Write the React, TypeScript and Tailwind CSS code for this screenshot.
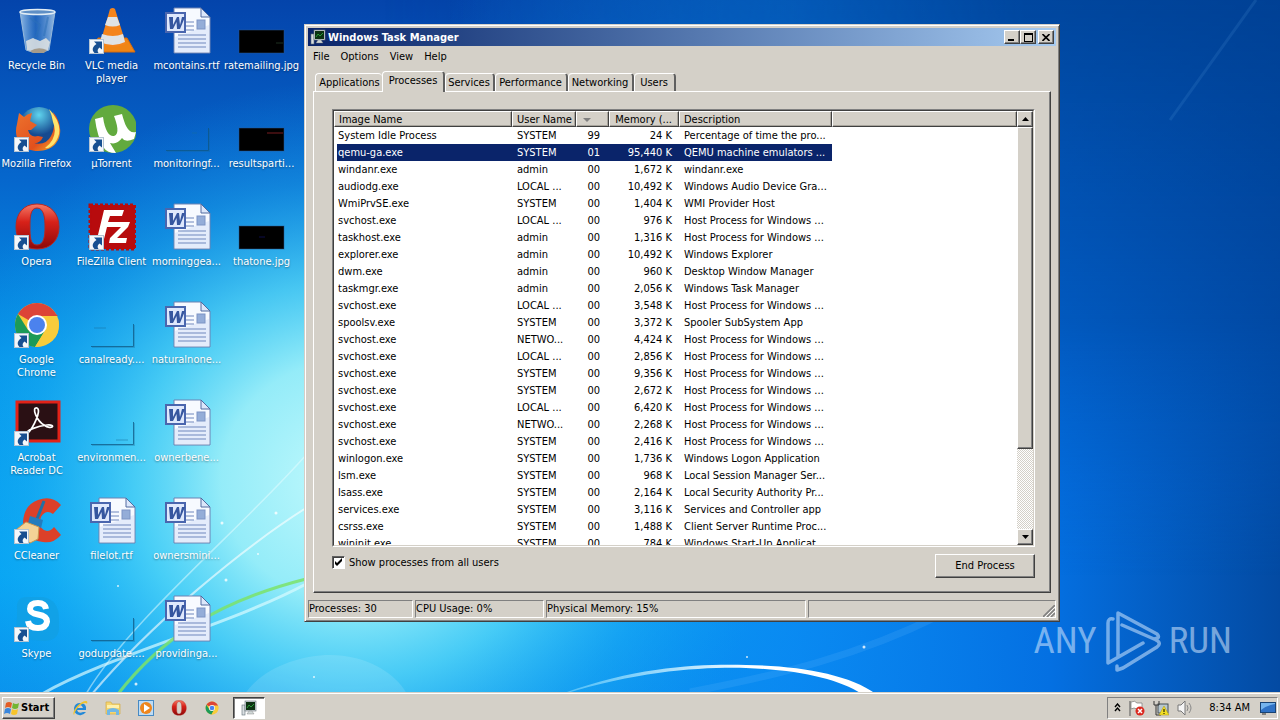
import { useState } from 'react';
import type { ReactNode } from 'react';

const raised = 'bg-[#d4d0c8] border border-t-white border-l-white border-r-[#404040] border-b-[#404040] shadow-[inset_-1px_-1px_0_#808080]';

const processes = [
  ['System Idle Process', 'SYSTEM', '99', '24 K', 'Percentage of time the pro...'],
  ['qemu-ga.exe', 'SYSTEM', '01', '95,440 K', 'QEMU machine emulators ...'],
  ['windanr.exe', 'admin', '00', '1,672 K', 'windanr.exe'],
  ['audiodg.exe', 'LOCAL ...', '00', '10,492 K', 'Windows Audio Device Gra...'],
  ['WmiPrvSE.exe', 'SYSTEM', '00', '1,404 K', 'WMI Provider Host'],
  ['svchost.exe', 'LOCAL ...', '00', '976 K', 'Host Process for Windows ...'],
  ['taskhost.exe', 'admin', '00', '1,316 K', 'Host Process for Windows ...'],
  ['explorer.exe', 'admin', '00', '10,492 K', 'Windows Explorer'],
  ['dwm.exe', 'admin', '00', '960 K', 'Desktop Window Manager'],
  ['taskmgr.exe', 'admin', '00', '2,056 K', 'Windows Task Manager'],
  ['svchost.exe', 'LOCAL ...', '00', '3,548 K', 'Host Process for Windows ...'],
  ['spoolsv.exe', 'SYSTEM', '00', '3,372 K', 'Spooler SubSystem App'],
  ['svchost.exe', 'NETWO...', '00', '4,424 K', 'Host Process for Windows ...'],
  ['svchost.exe', 'LOCAL ...', '00', '2,856 K', 'Host Process for Windows ...'],
  ['svchost.exe', 'SYSTEM', '00', '9,356 K', 'Host Process for Windows ...'],
  ['svchost.exe', 'SYSTEM', '00', '2,672 K', 'Host Process for Windows ...'],
  ['svchost.exe', 'LOCAL ...', '00', '6,420 K', 'Host Process for Windows ...'],
  ['svchost.exe', 'NETWO...', '00', '2,268 K', 'Host Process for Windows ...'],
  ['svchost.exe', 'SYSTEM', '00', '2,416 K', 'Host Process for Windows ...'],
  ['winlogon.exe', 'SYSTEM', '00', '1,736 K', 'Windows Logon Application'],
  ['lsm.exe', 'SYSTEM', '00', '968 K', 'Local Session Manager Ser...'],
  ['lsass.exe', 'SYSTEM', '00', '2,164 K', 'Local Security Authority Pr...'],
  ['services.exe', 'SYSTEM', '00', '3,116 K', 'Services and Controller app'],
  ['csrss.exe', 'SYSTEM', '00', '1,488 K', 'Client Server Runtime Proc...'],
  ['wininit.exe', 'SYSTEM', '00', '784 K', 'Windows Start-Up Applicat...'],
];

function Wallpaper() {
  return (
    <svg className="absolute inset-0 h-full w-full" viewBox="0 0 1280 720" preserveAspectRatio="none" aria-hidden="true">
      <defs>
        <linearGradient id="sky" x1="0" y1="0" x2="0" y2="1">
          <stop offset="0" stopColor="#0444ab" />
          <stop offset="0.25" stopColor="#0667cd" />
          <stop offset="0.5" stopColor="#0596ea" />
          <stop offset="0.8" stopColor="#04a4f4" />
          <stop offset="1" stopColor="#0b8fec" />
        </linearGradient>
        <radialGradient id="glow" gradientUnits="userSpaceOnUse" cx="0" cy="0" r="1" gradientTransform="translate(350 480) scale(430 400)">
          <stop offset="0" stopColor="#c4fafd" />
          <stop offset="0.3" stopColor="#9cf0f9" stopOpacity="0.95" />
          <stop offset="0.5" stopColor="#5cdcf8" stopOpacity="0.75" />
          <stop offset="0.75" stopColor="#27b8f4" stopOpacity="0.35" />
          <stop offset="1" stopColor="#10a0f0" stopOpacity="0" />
        </radialGradient>
        <linearGradient id="right" x1="0" y1="0" x2="1" y2="0">
          <stop offset="0.35" stopColor="#0e90f4" stopOpacity="0" />
          <stop offset="0.62" stopColor="#0a86f2" stopOpacity="0.8" />
          <stop offset="0.82" stopColor="#0470e2" />
          <stop offset="1" stopColor="#034aa2" />
        </linearGradient>
        <linearGradient id="top" x1="0" y1="0" x2="0" y2="1">
          <stop offset="0" stopColor="#003f92" stopOpacity="0.85" />
          <stop offset="0.45" stopColor="#0048a4" stopOpacity="0.55" />
          <stop offset="0.8" stopColor="#0060d0" stopOpacity="0" />
        </linearGradient>
        <linearGradient id="fade" x1="0" y1="0" x2="1" y2="0">
          <stop offset="0.3" stopColor="#000" />
          <stop offset="0.8" stopColor="#fff" />
        </linearGradient>
        <mask id="topMask"><rect width="1280" height="720" fill="url(#fade)" /></mask>
        <linearGradient id="arc" x1="0" y1="0" x2="1" y2="0">
          <stop offset="0" stopColor="#8fe0ff" stopOpacity="0.5" />
          <stop offset="0.6" stopColor="#fff" />
          <stop offset="1" stopColor="#fff" />
        </linearGradient>
      </defs>
      <rect width="1280" height="720" fill="url(#sky)" />
      <rect width="1280" height="720" fill="url(#right)" />
      <rect width="1280" height="720" fill="url(#top)" mask="url(#topMask)" />
      <rect width="1280" height="720" fill="url(#glow)" />
      <path d="M42 694C110 655 230 625 306 584" fill="none" stroke="#d8fbff" strokeWidth="3" opacity="0.7" />
      <path d="M86 694C130 620 240 530 306 455" fill="none" stroke="#e8feff" strokeWidth="1.5" opacity="0.5" />
      <path d="M92 694C150 625 240 550 306 508" fill="none" stroke="#fff" strokeWidth="2" opacity="0.6" />
      <path d="M118 694C160 640 215 602 306 579" fill="none" stroke="#7be36a" strokeWidth="3" opacity="0.85" />
      <path d="M245 694C262 668 300 655 330 655C365 655 395 672 407 694Z" fill="#fff" opacity="0.12" />
      <path d="M690 692C780 675 860 655 940 615" fill="none" stroke="#7cc4ff" strokeWidth="7" opacity="0.15" />
      <path d="M564 693C640 666 700 664 746 665C800 666 848 674 876 694H862C838 679 800 670 746 668C700 667 640 671 564 694Z" fill="url(#arc)" />
      <path d="M1170 120L1256 0" stroke="#5fa5e4" strokeWidth="3" opacity="0.15" />
      <g fill="#fff" opacity="0.8">
        <circle cx="222" cy="523" r="1.5" /><circle cx="276" cy="513" r="1.5" /><circle cx="226" cy="580" r="1.5" />
        <circle cx="136" cy="684" r="1.5" /><circle cx="118" cy="586" r="1" /><circle cx="258" cy="554" r="1" />
        <circle cx="864" cy="647" r="1.5" /><circle cx="747" cy="657" r="1" /><circle cx="314" cy="677" r="1" />
      </g>
    </svg>
  );
}

function Svg({ children, size = 48, box = 48 }: { children: ReactNode; size?: number; box?: number }) {
  return <svg width={size} height={size} viewBox={`0 0 ${box} ${box}`} aria-hidden="true" className="shrink-0">{children}</svg>;
}

function Shortcut() {
  return (
    <g>
      <rect x="1.5" y="32.5" width="14" height="14" fill="#f4f7fa" stroke="#b4c4d3" />
      <path d="M6 34.500H14V42.500L11.500 40.500C9.500 42 9 44 10.500 46H6.500C3.500 43 4.500 39.500 8.500 37Z" fill="#174f91" />
    </g>
  );
}

function ChromeArt() {
  return (
    <g>
      <circle cx="24" cy="24" r="22" fill="#f8cc3b" />
      <path d="M24 24L5 13A22 22 0 0 1 43 13L45 15H24Z" fill="#dc4437" />
      <path d="M5 13A22 22 0 0 0 22 46L33 28L24 33L15 29Z" fill="#1c9a58" />
      <path d="M22 46L33 28L45 17Q49 36 34 43Q28 46 22 46" fill="#f8cc3b" />
      <circle cx="24" cy="24" r="10" fill="#fff" />
      <circle cx="24" cy="24" r="8" fill="#4b82ee" />
    </g>
  );
}

function OperaArt() {
  return (
    <g>
      <defs>
        <linearGradient id="opera" x1="0" y1="0" x2="0" y2="1">
          <stop offset="0" stopColor="#f47a67" /><stop offset="0.4" stopColor="#d72119" /><stop offset="1" stopColor="#8c0809" />
        </linearGradient>
      </defs>
      <path fillRule="evenodd" d="M24 1C10 1 3 11 3 24S10 46 24 46S46 37 46 24S38 1 24 1M24 5C31 5 32 15 32 24S31 42 24 42S17 33 17 24S17 5 24 5" fill="url(#opera)" stroke="#b32925" />
    </g>
  );
}

function MonitorArt() {
  return (
    <g>
      <rect x="1" y="5" width="3" height="10" fill="#d9dee2" stroke="#626f77" strokeWidth="0.6" />
      <rect x="4" y="1" width="11" height="10" fill="#cfd6d9" stroke="#657078" strokeWidth="0.6" />
      <rect x="5" y="2" width="9" height="8" fill="#0c3212" />
      <path d="M6 8L8 5L10 7L13 4" stroke="#2a9a38" strokeWidth="1" fill="none" />
      <path d="M8 11H11L13 14H6Z" fill="#d0d8d8" stroke="#777" strokeWidth="0.4" />
    </g>
  );
}

function WordIcon() {
  return (
    <Svg>
      <path d="M11 1H38L47 10V46H11Z" fill="#f7faff" stroke="#6c82b3" />
      <path d="M12 30L46 18V45H12Z" fill="#d7e3f8" opacity="0.6" />
      <path d="M38 1V10H47Z" fill="#dce7fa" stroke="#526a9f" />
      <path d="M23 15H31M23 19H31M23 23H31M15 28H43M15 32H43M15 36H43M15 40H43" stroke="#6f87bd" />
      <rect x="34" y="13" width="8" height="9" fill="#94add8" stroke="#7d94c5" />
      <rect x="3" y="6" width="19" height="19" fill="#dfe8fc" stroke="#4a66ae" strokeWidth="2" />
      <path d="M6 10H10L10 18L14 10H16L17 18L19 10H22L17 22H14L13.500 15L10 22H7Z" fill="#36569f" />
    </Svg>
  );
}

function GhostImage({ mark }: { mark: string }) {
  return (
    <Svg>
      <path d={mark} stroke="#176e9d" strokeWidth="1" opacity="0.5" />
      <path d="M3 45.500H45.500V23" stroke="#0f5580" fill="none" opacity="0.75" />
      <path d="M4 46.500H46.500V24" stroke="#17658f" fill="none" opacity="0.3" />
    </Svg>
  );
}

function BlackImage({ mark, color }: { mark: string; color: string }) {
  return (
    <Svg>
      <rect x="1" y="23" width="45" height="23" fill="#000" stroke="#2b5a8f" strokeOpacity="0.5" />
      <path d={mark} stroke={color} opacity="0.8" />
    </Svg>
  );
}

const icons: Record<string, ReactNode> = {
  bin: (
    <Svg>
      <defs><linearGradient id="bin"><stop stopColor="#b4d6f2" stopOpacity="0.8" /><stop offset="0.45" stopColor="#3d82cb" stopOpacity="0.5" /><stop offset="1" stopColor="#b9d6ef" stopOpacity="0.8" /></linearGradient></defs>
      <path d="M7 5L13 43Q24 48 36 43L42 5Z" fill="url(#bin)" stroke="#98badb" />
      <path d="M13 34L20 31L27 34L33 31L37 35L35 43Q24 47 14 43Z" fill="#e4e5e3" opacity="0.85" />
      <path d="M17 44Q25 39 34 43L31 46H20Z" fill="#a59b8b" />
      <path d="M17 11L27 18L22 32M35 10L31 29" stroke="#2b6fb7" strokeWidth="2" fill="none" opacity="0.5" />
      <ellipse cx="24.500" cy="5" rx="17.500" ry="2.500" fill="#5f8fc5" stroke="#e2edf5" strokeWidth="1.5" />
    </Svg>
  ),
  firefox: (
    <Svg>
      <defs>
        <radialGradient id="globe" cx="0.5" cy="0.2"><stop stopColor="#5fd4ee" /><stop offset="1" stopColor="#164a90" /></radialGradient>
        <linearGradient id="fox" x1="0" y1="0" x2="1" y2="1"><stop stopColor="#ec732e" /><stop offset="0.65" stopColor="#e2501d" /><stop offset="1" stopColor="#f5bb2e" /></linearGradient>
      </defs>
      <circle cx="26" cy="22" r="20" fill="url(#globe)" />
      <path d="M40 7C54 24 47 46 25 46C8 46 0 33 4 19L6 8L11 12Q14 9 19 8L17 16L24 20L18 25H15Q17 33 25 31L30 32Q27 39 20 38Q33 41 38 31Q43 22 40 7Z" fill="url(#fox)" />
      <path d="M36 4Q54 23 41 39Q36 44 32 43Q46 32 40 17Q39 10 36 4Z" fill="#ffe36c" />
      <Shortcut />
    </Svg>
  ),
  opera: <Svg><OperaArt /><Shortcut /></Svg>,
  chrome: <Svg><ChromeArt /><Shortcut /></Svg>,
  acrobat: (
    <Svg>
      <rect x="4" y="3" width="42" height="39" fill="#2a1014" stroke="#e22218" strokeWidth="3" />
      <path d="M15 34C11 32 25 27 34 26C44 25 39 32 31 26C24 22 18 8 24 9C29 11 20 29 15 34Z" fill="none" stroke="#fff" strokeWidth="1.7" />
      <Shortcut />
    </Svg>
  ),
  ccleaner: (
    <Svg>
      <path d="M48 8L40 17Q33 12 28 20Q24 32 34 34Q38 34 41 30L48 38Q40 47 30 45Q12 43 10 25Q11 8 25 3Q39 -2 48 8Z" fill="#dc4029" />
      <path d="M31 4L24 22" stroke="#216fa4" strokeWidth="3" />
      <path d="M17 19L30 23L28 31L15 26Z" fill="#257cbd" />
      <path d="M13 25L26 30L25 42L17 46L4 32Z" fill="#f4d397" stroke="#c99650" />
      <Shortcut />
    </Svg>
  ),
  skype: (
    <Svg>
      <path d="M4 14Q3 1 15 2L30 2Q46 5 46 24V34Q45 46 31 46L18 45Q1 43 4 22Z" fill="#139fe0" opacity="0.6" />
      <path d="M33 14Q32 8 25 8Q17 8 17 14Q17 18 25 19.500Q34 21 34 26.500Q33 33 25 33Q16 33 15 26" fill="none" stroke="#fff" strokeWidth="6" />
      <Shortcut />
    </Svg>
  ),
  vlc: (
    <Svg>
      <path d="M10 31H39L47 45H3Z" fill="#ef8515" stroke="#d76b0d" />
      <path d="M22 2Q25 0 27 2L38 37Q25 43 12 37Z" fill="#f4841c" />
      <path d="M20 10H29L32 18Q25 21 17 18ZM14 27Q25 31 35 27L37 35Q25 41 12 35Z" fill="#dfe3e6" />
      <Shortcut />
    </Svg>
  ),
  utorrent: (
    <Svg>
      <circle cx="25" cy="24" r="24" fill="#62aa3e" />
      <path d="M7 14L15 12C17 27 22 32 26 31C32 29 29 19 26 11L34 9C37 20 40 29 48 27L46 34Q37 38 34 33Q29 40 22 38L28 48Q19 48 16 43Q9 31 7 14Z" fill="#fff" />
      <Shortcut />
    </Svg>
  ),
  filezilla: (
    <Svg>
      <rect x="2" y="2" width="45" height="44" fill="#b70b0d" stroke="#b70b0d" strokeWidth="3" strokeDasharray="3 2" />
      <path d="M16 7H36L34 13H22L20 19H30L28 24H19L16 36H9ZM26 19H42L40 24L29 35H39L38 40H21L22 35L33 24H25Z" fill="#fff" />
      <Shortcut />
    </Svg>
  ),
  word: <WordIcon />,
  ghostLeft: <GhostImage mark="M6 27H18" />,
  ghostTop: <GhostImage mark="M29 28H34" />,
  ghostRight: <GhostImage mark="M28 41H40" />,
  ghostPlain: <GhostImage mark="" />,
  blackGray: <BlackImage mark="M38 36H45" color="#263c28" />,
  blackRed: <BlackImage mark="M29 28H45" color="#98242b" />,
  blackBlue: <BlackImage mark="M21 34H27" color="#10105c" />,
};

const desktopItems = [
  ['bin', 'Recycle Bin'], ['firefox', 'Mozilla Firefox'], ['opera', 'Opera'], ['chrome', 'Google Chrome'],
  ['acrobat', 'Acrobat Reader DC'], ['ccleaner', 'CCleaner'], ['skype', 'Skype'],
  ['vlc', 'VLC media player'], ['utorrent', 'µTorrent'], ['filezilla', 'FileZilla Client'], ['ghostLeft', 'canalready....'],
  ['ghostRight', 'environmen...'], ['word', 'filelot.rtf'], ['ghostPlain', 'godupdate....'],
  ['word', 'mcontains.rtf'], ['ghostTop', 'monitoringf...'], ['word', 'morninggea...'], ['word', 'naturalnone...'],
  ['word', 'ownerbene...'], ['word', 'ownersmini...'], ['word', 'providinga...'],
  ['blackGray', 'ratemailing.jpg'], ['blackRed', 'resultsparti...'], ['blackBlue', 'thatone.jpg'],
];

function ProcessTable() {
  const [selected, setSelected] = useState(1);
  const th = 'h-4 overflow-hidden whitespace-nowrap border border-t-white border-l-white border-r-[#404040] border-b-[#404040] bg-[#d4d0c8] pt-px font-normal leading-[13px] shadow-[inset_-1px_-1px_0_#a8a49c]';
  return (
    <div className="flex h-[438px] border border-t-[#808080] border-l-[#808080] border-r-white border-b-white bg-white">
      <div className="flex min-w-0 flex-1 border border-t-[#404040] border-l-[#404040] border-r-[#d4d0c8] border-b-[#d4d0c8]">
        <div className="min-w-0 flex-1 overflow-hidden">
          <table className="w-full table-fixed border-separate border-spacing-0">
            <colgroup>
              <col className="w-[178px]" /><col className="w-16" /><col className="w-[33px]" /><col className="w-[70px]" /><col className="w-[153px]" /><col />
            </colgroup>
            <thead>
              <tr>
                <th className={`${th} pl-1 text-left`}>Image Name</th>
                <th className={`${th} pl-1 text-left`}>User Name</th>
                <th className={`${th} pl-1.5`} aria-label="CPU">
                  <svg width="8" height="4" viewBox="0 0 8 4" aria-hidden="true"><path d="M0 0H8L4 4Z" fill="#808080" /></svg>
                </th>
                <th className={`${th} pr-1.5 text-right`}>Memory (...</th>
                <th className={`${th} pl-1 text-left`}>Description</th>
                <th className={th}></th>
              </tr>
            </thead>
            <tbody>
              {processes.map((row, i) => {
                const cell = `h-[17px] overflow-hidden whitespace-nowrap pt-px leading-4 ${i === selected ? 'bg-[#0a246a] text-white' : ''}`;
                return (
                  <tr key={i} onClick={() => setSelected(i)}>
                    <td className="p-0"><div className={`${cell} ml-[3px] pl-px`}>{row[0]}</div></td>
                    <td className="p-0"><div className={`${cell} pl-[5px]`}>{row[1]}</div></td>
                    <td className="p-0"><div className={`${cell} pr-[9px] text-right`}>{row[2]}</div></td>
                    <td className="p-0"><div className={`${cell} pr-[7px] text-right`}>{row[3]}</div></td>
                    <td className="p-0"><div className={`${cell} pl-[5px]`}>{row[4]}</div></td>
                    <td className="p-0"></td>
                  </tr>
                );
              })}
            </tbody>
          </table>
        </div>
        <div className="flex w-4 flex-col bg-[repeating-conic-gradient(#fff_0_25%,#d4d0c8_0_50%)] bg-[length:2px_2px]">
          <button aria-label="Scroll up" className={`flex h-4 items-center justify-center ${raised}`}>
            <svg width="7" height="4" viewBox="0 0 7 4"><path d="M0 4H7L3.5 0Z" /></svg>
          </button>
          <div className={`h-[322px] ${raised}`}></div>
          <button aria-label="Scroll down" className={`mt-auto flex h-4 items-center justify-center ${raised}`}>
            <svg width="7" height="4" viewBox="0 0 7 4"><path d="M0 0H7L3.5 4Z" /></svg>
          </button>
        </div>
      </div>
    </div>
  );
}

const tabs = [
  ['Services', 'w-[50px]'],
  ['Performance', 'w-[73px]'],
  ['Networking', 'w-[66px]'],
  ['Users', 'w-[42px]'],
];

function TaskManager() {
  const [allUsers, setAllUsers] = useState(true);
  const status = 'h-[18px] border border-t-[#808080] border-l-[#808080] border-r-white border-b-white leading-4';
  return (
    <section aria-label="Windows Task Manager" className="absolute left-[304px] top-6 w-[756px] border border-t-[#d4d0c8] border-l-[#d4d0c8] border-r-[#404040] border-b-[#404040] bg-[#d4d0c8] p-[3px] shadow-[inset_1px_1px_0_#fff,inset_-1px_-1px_0_#808080]">
      <header className="flex h-[18px] items-center bg-linear-to-r from-[#0a246a] to-[#a6caf0] px-0.5 text-white">
        <Svg size={16} box={16}><MonitorArt /></Svg>
        <h1 className="ml-0.5 flex-1 font-bold">Windows Task Manager</h1>
        <button aria-label="Minimize" className={`flex h-[14px] w-4 items-end pb-0.5 pl-[3px] ${raised}`}><span className="h-0.5 w-1.5 bg-black"></span></button>
        <button aria-label="Maximize" className={`flex h-[14px] w-4 items-center justify-center ${raised}`}><span className="h-[9px] w-[9px] border border-t-2 border-black"></span></button>
        <button aria-label="Close" className={`ml-0.5 flex h-[14px] w-4 items-center justify-center ${raised}`}>
          <svg width="8" height="7" viewBox="0 0 8 7"><path d="M0.5 0L7.5 7M7.5 0L0.5 7" stroke="#000" strokeWidth="1.6" /></svg>
        </button>
      </header>
      <nav className="flex h-5 items-center gap-[11px] px-[5px]">
        {['File', 'Options', 'View', 'Help'].map((m) => <button key={m}>{m}</button>)}
      </nav>
      <main className="px-[5px] pt-[5px]">
        <div role="tablist" className="flex items-end pl-0.5">
          <button role="tab" className="h-[18px] w-[67px] whitespace-nowrap rounded-t-sm border-t border-l border-white pl-px">Applications</button>
          <button role="tab" aria-selected="true" className="relative -mb-px h-[21px] w-[63px] rounded-t-sm border-t border-l border-r-2 border-t-white border-l-white border-r-[#606060] bg-[#d4d0c8] pb-[3px]">Processes</button>
          {tabs.map(([t, width]) => (
            <button key={t} role="tab" className={`h-[18px] rounded-t-sm border-t border-r-2 border-t-white border-r-[#606060] shadow-[inset_1px_0_0_#fff] ${width}`}>{t}</button>
          ))}
        </div>
        <div className="border border-t-white border-l-white border-r-[#404040] border-b-[#404040] pt-[17px] pr-[15px] pb-3.5 pl-[18px] shadow-[inset_-1px_-1px_0_#808080]">
          <ProcessTable />
          <div className="mt-[7px] flex items-start justify-between">
            <label className="flex h-4 items-center gap-1">
              <span className="relative flex">
                <input type="checkbox" checked={allUsers} onChange={(e) => setAllUsers(e.target.checked)} className="h-[13px] w-[13px] appearance-none border border-t-[#606060] border-l-[#606060] border-r-white border-b-white bg-white shadow-[inset_1px_1px_0_#404040]" />
                {allUsers && <svg width="13" height="13" viewBox="0 0 13 13" className="pointer-events-none absolute inset-0"><path d="M3 5V8L5 10L10 5V2L5 7Z" /></svg>}
              </span>
              Show processes from all users
            </label>
            <button className={`h-6 w-[100px] pb-0.5 ${raised}`}>End Process</button>
          </div>
        </div>
      </main>
      <footer className="mt-[7px] flex gap-0.5">
        <div className={`${status} w-[105px]`}>Processes: 30</div>
        <div className={`${status} w-[129px]`}>CPU Usage: 0%</div>
        <div className={`${status} w-[260px]`}>Physical Memory: 15%</div>
        <div className={`${status} flex flex-1 items-end justify-end`}>
          <svg width="12" height="12" viewBox="0 0 12 12" aria-hidden="true"><path d="M0 12L12 0M4 12L12 4M8 12L12 8" stroke="#808080" strokeWidth="1.6" /><path d="M2 12L12 2M6 12L12 6" stroke="#fff" strokeWidth="0.8" /></svg>
        </div>
      </footer>
    </section>
  );
}

function Watermark() {
  return (
    <div className="absolute right-12 bottom-5 flex items-center gap-2 font-['Roboto_Condensed','Open_Sans_Condensed',Roboto,sans-serif] text-[37px] leading-[62px] text-[#dcecff]/55">
      <span>ANY</span>
      <svg width="56" height="62" viewBox="0 0 56 62" fill="none" stroke="#d2e7ff" strokeOpacity="0.55" strokeWidth="3.5" strokeLinejoin="round" strokeLinecap="round" aria-hidden="true">
        <path d="M8 9Q3 8 3 13V53L38 33M13 46V3L52 24Q56 28 49 29L17 15M12 56V60L18 58L52 37Q57 33 51 30" />
      </svg>
      <span>RUN</span>
    </div>
  );
}

function Taskbar() {
  const quick = 'flex h-[22px] w-[33px] items-center justify-center';
  return (
    <footer className="relative flex h-7 items-center border-t border-[#d4d0c8] bg-[#d4d0c8] px-0.5 shadow-[inset_0_1px_0_#fff]">
      <button className={`mt-0.5 flex h-[22px] w-[53px] items-center gap-px pl-px font-bold ${raised}`}>
        <Svg size={16} box={16}>
          <path d="M2 3Q5 1 8 3L7 8Q4 6 1 8Z" fill="#e35d25" /><path d="M9 3Q12 5 15 3L14 8Q11 10 8 8Z" fill="#73b532" />
          <path d="M1 9Q4 7 7 9L6 14Q3 12 0 14Z" fill="#3986dc" /><path d="M8 9Q11 11 14 9L13 14Q10 16 7 14Z" fill="#f7c42b" />
        </Svg>
        Start
      </button>
      <nav className="mt-0.5 ml-2 flex items-center" aria-label="Quick launch">
        <button className={quick} aria-label="Internet Explorer">
          <Svg size={16} box={16}>
            <path d="M14 10H5Q6 14 11 12H14Q11 16 7 15Q2 14 2 8Q3 3 8 3Q15 3 14 10M5 8H11Q10 5 8 5Q5 6 5 8" fill="#2389d8" />
            <path d="M2 15C-1 12 8 1 14 1Q16 1 15 4Q14 2 10 4Q4 8 2 15" fill="#efc22e" />
          </Svg>
        </button>
        <button className={quick} aria-label="Explorer">
          <Svg size={16} box={16}>
            <path d="M1 2H6L7 4H15V14H1Z" fill="#f5d570" stroke="#d3ac45" strokeWidth="0.7" /><path d="M2 5H14V8H2Z" fill="#fff0aa" />
            <path d="M2 15V10Q8 6 14 10V15H11V12H5V15Z" fill="#71b8e5" />
          </Svg>
        </button>
        <button className={quick} aria-label="Media Player">
          <Svg size={16} box={16}>
            <rect x="0.5" y="0.5" width="15" height="15" fill="#bfdcf4" stroke="#478ac4" /><circle cx="8" cy="8" r="6" fill="#ef861d" /><path d="M6 4L12 8L6 12Z" fill="#fff" />
          </Svg>
        </button>
        <button className={quick} aria-label="Opera"><Svg size={16}><OperaArt /></Svg></button>
        <button className={`${quick} mr-[5px]`} aria-label="Chrome"><Svg size={14}><ChromeArt /></Svg></button>
        <button aria-label="Windows Task Manager" className="flex h-[22px] w-8 items-center justify-center border border-t-[#404040] border-l-[#404040] border-r-white border-b-white bg-white shadow-[inset_1px_1px_0_#808080]">
          <Svg size={16} box={16}><MonitorArt /></Svg>
        </button>
      </nav>
      <div className="mt-0.5 ml-auto flex h-[22px] items-center border border-t-[#808080] border-l-[#808080] border-r-white border-b-white pl-1.5 pr-px">
        <svg width="7" height="9" viewBox="0 0 7 9" className="mr-2" aria-hidden="true"><path d="M1 4L3.5 1L6 4M1 8L3.5 5L6 8" stroke="#000" strokeWidth="1.4" fill="none" /></svg>
        <div className="flex gap-2">
          <Svg size={16} box={16}>
            <path d="M1 1V16" stroke="#555" /><path d="M2 2Q6 0 8 3H13V9H8Q5 7 2 9Z" fill="#fff" stroke="#777" strokeWidth="0.7" />
            <circle cx="11" cy="11" r="4.5" fill="#db2920" /><path d="M9 9L13 13M13 9L9 13" stroke="#fff" strokeWidth="1.5" />
          </Svg>
          <Svg size={16} box={16}>
            <rect x="5" y="4" width="10" height="9" fill="#b7c7d0" stroke="#454f55" /><path d="M1 1V5H6V1M3 5V15H8" stroke="#343434" fill="none" />
            <path d="M11 6L16 15H6Z" fill="#f3df24" stroke="#a69117" strokeWidth="0.5" /><path d="M11 9V12M11 13V14" stroke="#000" />
          </Svg>
          <Svg size={16} box={16}>
            <path d="M1 5H4L8 1V15L4 11H1Z" fill="#f5f5f5" stroke="#777" /><path d="M10 5Q12 8 10 11M12 3Q16 8 12 13" fill="none" stroke="#888" />
          </Svg>
        </div>
        <time className="mr-2.5 ml-4">8:34 AM</time>
        <button aria-label="Show desktop">
          <Svg size={16} box={16}><rect x="0.5" y="2.5" width="15" height="10" fill="#2f72c5" stroke="#194373" /><path d="M1 10Q8 5 15 4V3H1Z" fill="#75b4ed" /><path d="M2 14H6" stroke="#333" /></Svg>
        </button>
      </div>
    </footer>
  );
}

export default function App() {
  return (
    <div className="relative flex min-h-screen flex-col overflow-hidden bg-[#0667cd] font-['DejaVu_Sans_Condensed',Tahoma,'DejaVu_Sans',sans-serif] text-[11px] leading-[13px] text-black">
      <Wallpaper />
      <div className="relative flex-1 pt-[7px]">
        <Watermark />
        <div className="grid w-max grid-flow-col grid-rows-7 gap-x-0.5 gap-y-2.5">
          {desktopItems.map(([icon, label]) => (
            <button key={label} className="flex h-[88px] w-[73px] flex-col items-center gap-1 text-center text-white">
              {icons[icon]}
              <span className={label.includes('.') || label.includes('Zilla') || label.includes('Mozilla') ? 'whitespace-nowrap [text-shadow:0_1px_2px_#0006]' : 'px-2 [text-shadow:0_1px_2px_#0006]'}>{label}</span>
            </button>
          ))}
        </div>
        <TaskManager />
      </div>
      <Taskbar />
    </div>
  );
}
